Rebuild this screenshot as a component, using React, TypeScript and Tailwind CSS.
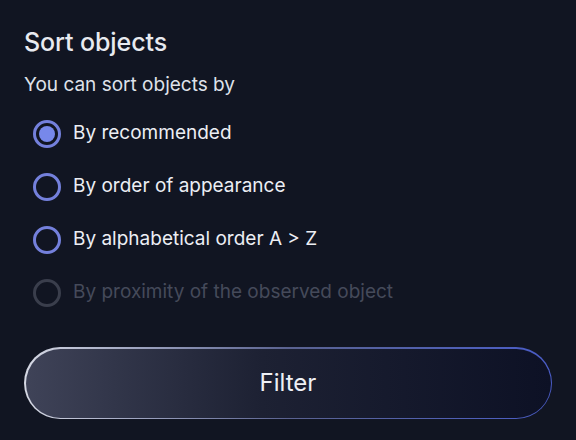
const options = [
  { label: 'By recommended', checked: true, disabled: false },
  { label: 'By order of appearance', checked: false, disabled: false },
  { label: 'By alphabetical order A > Z', checked: false, disabled: false },
  { label: 'By proximity of the observed object', checked: false, disabled: true },
]

function Radio({ checked, disabled }: { checked: boolean; disabled: boolean }) {
  return (
    <span
      className={`flex h-7 w-7 shrink-0 items-center justify-center rounded-full border-[3px] ${
        disabled ? 'border-[#3a3e4c]' : 'border-[#7480dc]'
      }`}
    >
      {checked && <span className="h-4 w-4 rounded-full bg-[#7788ea]" />}
    </span>
  )
}

export default function App() {
  return (
    <div
      className="h-[440px] w-[576px] bg-[#111522] px-6 pt-[26px] text-[#e8eaf0]"
      style={{ fontFamily: 'Inter, "Noto Sans", sans-serif' }}
    >
      <h2 className="text-[25px] font-medium leading-[32px] tracking-[-0.1px]">Sort objects</h2>
      <p className="mt-[13px] text-[19px] leading-[28px] text-[#dfe2ea]">You can sort objects by</p>

      <ul className="mt-[8px] flex flex-col">
        {options.map((o) => (
          <li key={o.label} className="flex h-[53px] items-center gap-[12px] pl-[9px]">
            <Radio checked={o.checked} disabled={o.disabled} />
            <span className={`text-[19px] ${o.disabled ? 'text-[#454a5a]' : 'text-[#eceef4]'}`}>
              {o.label}
            </span>
          </li>
        ))}
      </ul>

      <div className="mt-[28px] rounded-full bg-gradient-to-r from-[#d6d9e4] via-[#5a6290] to-[#4a5cc8] p-[1.5px]">
        <button className="flex h-[69px] w-full items-center justify-center rounded-full bg-gradient-to-r from-[#3f4358] via-[#1d2133] via-45% to-[#0d1125] text-[24px] text-[#eef0f5]">
          Filter
        </button>
      </div>
    </div>
  )
}
